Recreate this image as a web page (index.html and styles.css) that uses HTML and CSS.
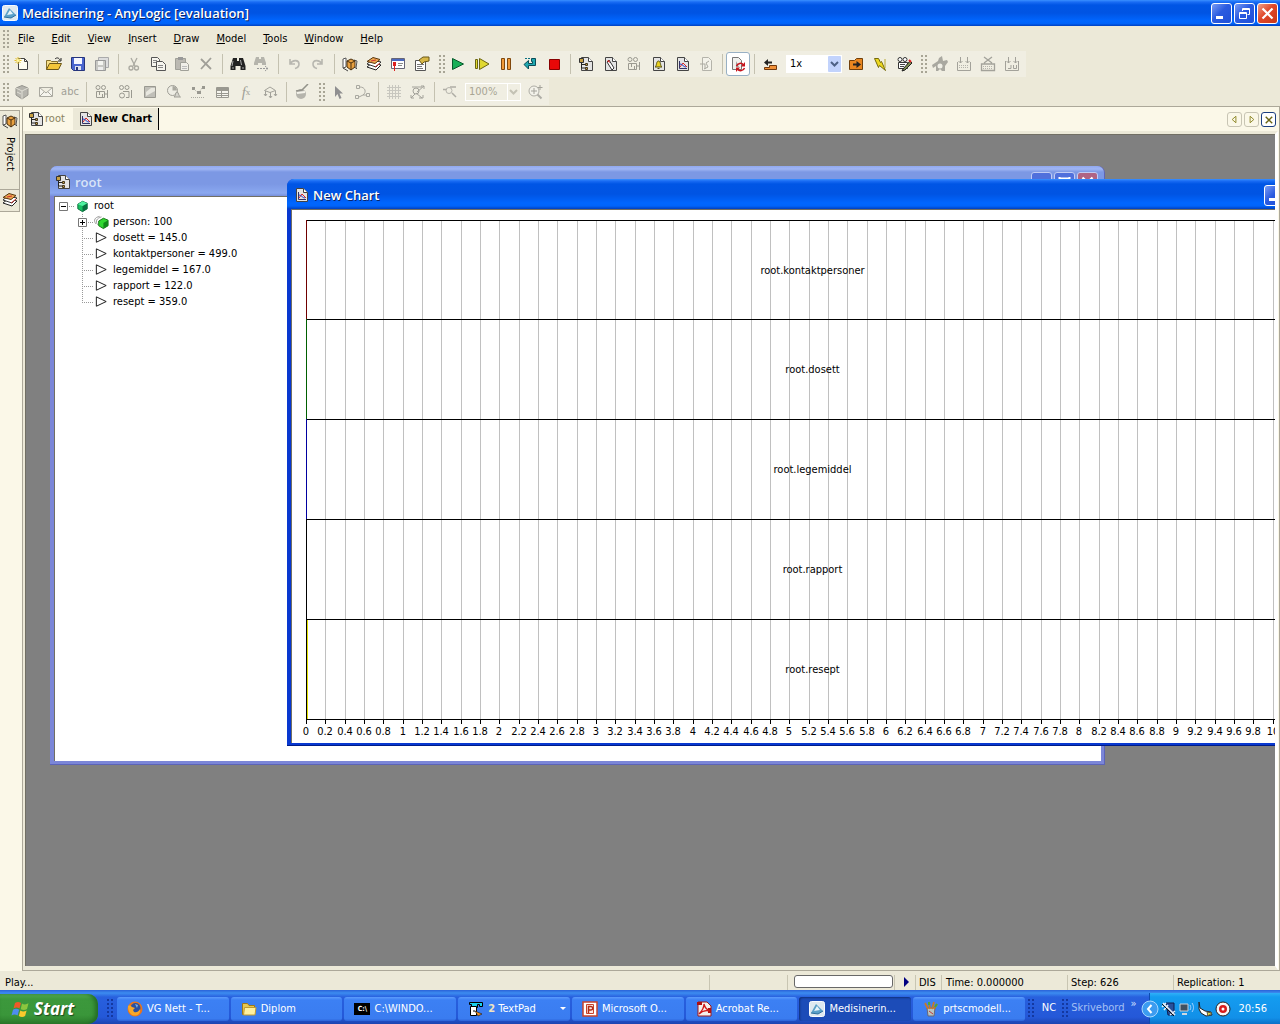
FILE: index.html
```html
<!DOCTYPE html>
<html lang="en">
<head>
<meta charset="utf-8">
<title>Medisinering - AnyLogic [evaluation]</title>
<link rel="stylesheet" href="styles.css">
</head>
<body>
<svg class="sprite" aria-hidden="true">
  <symbol id="app" viewBox="0 0 16 16"><rect x=".5" y=".5" width="15" height="15" rx="2" fill="#dfe9f0" stroke="#f8fbff"/><path d="M2 12L7 3l7 7-5 3z" fill="#5aa0c8"/><path d="M5 10l3-5 3 4z" fill="#e8f4fa"/><path d="M2 12l7 1 5-3" fill="none" stroke="#2c6f9c"/></symbol>
  <symbol id="new" viewBox="0 0 16 16"><path d="M4.500 2.500h6l3 3v8h-9z" fill="#fffef0" stroke="#444"/><path d="M10.500 2.500v3h3" fill="none" stroke="#444"/><path d="M4 1v7M.5 4.500h7M1.500 2l5 5M6.500 2l-5 5" stroke="#e2bd28"/><circle cx="4" cy="4.500" r="1.500" fill="#fff6a0"/></symbol>
  <symbol id="open" viewBox="0 0 16 16"><path d="M.5 13.500v-9h4l1 1h6v2" fill="#f8e088" stroke="#86702a"/><path d="M.5 13.500l3-6h12l-3 6z" fill="#f4c63a" stroke="#6b5618"/><path d="M9 3c2-2 4-1 5 1m1-2v3h-3" fill="none" stroke="#222"/></symbol>
  <symbol id="save" viewBox="0 0 16 16"><path d="M1.500 1.500h13v13h-11l-2-2z" fill="#4b66cf" stroke="#26357c"/><path d="M4 2h8v6H4z" fill="#f6f7ff"/><path d="M5 10h6v4H5z" fill="#dfe2ee"/><path d="M6 11h2v3H6z" fill="#26357c"/></symbol>
  <symbol id="saveall" viewBox="0 0 16 16"><path d="M4.500 1.500h10v10h-10z" fill="#ddd" stroke="#aaa"/><path d="M1.500 4.500h10v10h-10z" fill="#c8c8c4" stroke="#999"/><path d="M4 5h5v4H4z" fill="#f4f4f0"/><path d="M4 11h5v3H4z" fill="#eee"/></symbol>
  <symbol id="cut" viewBox="0 0 16 16"><g fill="none" stroke="#aaa9a0" stroke-width="1.300"><path d="M5 2l4 8M11 2L7 10"/><circle cx="5" cy="12" r="2"/><circle cx="10.500" cy="12" r="2"/></g></symbol>
  <symbol id="copy" viewBox="0 0 16 16"><g fill="#f6f5ee" stroke="#555"><path d="M1.500 1.500h6l2 2v7h-8z"/><path d="M6.500 5.500h6l3 3v6h-9z"/></g><path d="M3 4.500h4M3 6.500h3M8 9.500h5M8 11.500h5" stroke="#888"/></symbol>
  <symbol id="paste" viewBox="0 0 16 16"><path d="M1.500 2.500h10v11h-10z" fill="#bbb9b2" stroke="#a0a098"/><path d="M4 1h5v3H4z" fill="#999"/><path d="M6.500 6.500h6l2 2v6h-8z" fill="#f0efe8" stroke="#a0a098"/><path d="M8 10.500h5M8 12.500h5" stroke="#bbb"/></symbol>
  <symbol id="del" viewBox="0 0 16 16"><path d="M3 3l10 10M13 2L3 13" stroke="#a09f98" stroke-width="1.800"/></symbol>
  <symbol id="find" viewBox="0 0 16 16"><path d="M3 2h4v3h2V2h4l2.500 8v4h-5v-4h-5v4h-5v-4z" fill="#222"/><path d="M3 5l-1 5M10.500 4l1 5M2 12h2M12 12h2" stroke="#aaa"/></symbol>
  <symbol id="findnext" viewBox="0 0 16 16"><path d="M2 1h3v2h2V1h3l2 6v2H8V7H4v2H0V7z" fill="#b5b4ac"/><path d="M3 12.500h11M11 10l3 2.500-3 2.500" fill="none" stroke="#999" stroke-dasharray="2 1"/></symbol>
  <symbol id="undo" viewBox="0 0 16 16"><path d="M4 3v5h5M4 8c3-5 9-4 9 0 0 3-2 4-4 4.500" fill="none" stroke="#b8b7b0" stroke-width="1.600"/></symbol>
  <symbol id="redo" viewBox="0 0 16 16"><path d="M12 3v5H7M12 8c-3-5-9-4-9 0 0 3 2 4 4 4.500" fill="none" stroke="#b8b7b0" stroke-width="1.600"/></symbol>
  <symbol id="project" viewBox="0 0 16 16"><path d="M1 3l3-1v9l-3 1zM12 4l3 1-1 7-3-1z" fill="#fff" stroke="#555"/><path d="M5 5l4-2 4 2v6l-4 3-4-3z" fill="#e8a040" stroke="#4a3010"/><path d="M5 5l4 2 4-2M9 7v7" fill="none" stroke="#4a3010"/><path d="M1 12l5 3M14 12l1 1" stroke="#444"/></symbol>
  <symbol id="lib" viewBox="0 0 16 16"><path d="M1 11l5-4 9 2-5 5z" fill="#fff" stroke="#222"/><path d="M1 8l5-4 9 2-5 5z" fill="#fff" stroke="#333"/><path d="M1 5.500l6-4 7 2-5 4z" fill="#eda750" stroke="#5a3810"/><path d="M5 5l5-1M9 11l5-4" stroke="#c33"/></symbol>
  <symbol id="props" viewBox="0 0 16 16"><path d="M1.500 2.500h13v10h-13z" fill="#fff" stroke="#667"/><path d="M2 3h12v2H2z" fill="#4a68c0"/><path d="M8 7.500h5M8 9.500h4" stroke="#888"/><path d="M3 6h3v4H3z" fill="#d22"/><path d="M4.500 10v5" stroke="#d22"/></symbol>
  <symbol id="wizard" viewBox="0 0 16 16"><path d="M1.500 4.500h10v10h-10z" fill="#fff" stroke="#555"/><path d="M3 8.500h7M3 10.500h5M3 12.500h6" stroke="#777"/><path d="M5 4l4-3h6v4l-5 1-2 2z" fill="#d8b848" stroke="#6a5818"/></symbol>
  <symbol id="play" viewBox="0 0 16 16"><path d="M2.500 2.500L13.500 8l-11 5.500z" fill="#18b058" stroke="#075a2c"/></symbol>
  <symbol id="step" viewBox="0 0 16 16"><path d="M1.500 3.500h2v9h-2zM5.500 2.500L15 8l-9.500 5.500z" fill="#e0d830" stroke="#6a6410"/></symbol>
  <symbol id="pause" viewBox="0 0 16 16"><path d="M3.500 2.500h3v11h-3zM9.500 2.500h3v11h-3z" fill="#f09a38" stroke="#80480c"/></symbol>
  <symbol id="restart" viewBox="0 0 16 16"><path d="M9.500 2.500h4v7h-7V13L2 8.500 6.500 4.500v3h4v-2h-1z" fill="#1fa8b0" stroke="#0a4c58"/><path d="M3 2.500h5" stroke="#0a7080" stroke-dasharray="2 1"/></symbol>
  <symbol id="stop" viewBox="0 0 16 16"><path d="M3.500 3.500h10v10h-10z" fill="#e80808" stroke="#800"/></symbol>
  <symbol id="page" viewBox="0 0 16 16"><path d="M3.500 1.500h7l4 4v9h-11z" fill="#e4e4e4" stroke="#444"/><path d="M10.500 1.500v4h4" fill="#fff" stroke="#444"/></symbol>
  <symbol id="tree" viewBox="0 0 16 16"><use href="#page"/><path d="M3.500 5v7H8M4 8.500h4" fill="none" stroke="#222"/><path d="M1.500 2.500h4v4h-4z" fill="#c8a040" stroke="#333"/><path d="M7.500 7.500h2v2h-2zM7.500 11.500h2v2h-2z" fill="#c8a040" stroke="#443820"/></symbol>
  <symbol id="edit" viewBox="0 0 16 16"><use href="#page"/><path d="M7 4l5 8-2 2-5-8z" fill="#fff" stroke="#333"/><path d="M5 5l2-1 1 3z" fill="#d22"/></symbol>
  <symbol id="cam" viewBox="0 0 16 16"><g fill="none" stroke="#9a9990"><circle cx="4" cy="3.500" r="2"/><circle cx="9.500" cy="3.500" r="2"/><path d="M2.500 7.500h8v6h-8zM13.500 6v8M5.500 8v3M8.500 10v3M11 10h2"/></g></symbol>
  <symbol id="cam2" viewBox="0 0 16 16"><g fill="none" stroke="#9a9990"><circle cx="3.500" cy="3.500" r="2"/><circle cx="9" cy="3.500" r="2"/><circle cx="4" cy="11.500" r="2.500"/><path d="M5 7.500h6v6H8M13.500 6v8"/></g></symbol>
  <symbol id="bell" viewBox="0 0 16 16"><use href="#page"/><path d="M5 11c2-1 1-6 3.500-6s1.500 5 3.500 6zM7.500 12.500h2" fill="#e8d020" stroke="#555010"/></symbol>
  <symbol id="chart" viewBox="0 0 16 16"><use href="#page"/><path d="M5.500 5v7.500H13" fill="none" stroke="#336"/><path d="M6 11l3-4 4 4" fill="none" stroke="#d22"/><path d="M6 8c3 0 3 3 6 3" fill="none" stroke="#24c"/></symbol>
  <symbol id="pagedim" viewBox="0 0 16 16"><path d="M4.500 1.500h6l3 3v10h-9z" fill="#f3f2ea" stroke="#b4b3aa"/><path d="M2 8h5v5M11 5l-3 2 2 4-4 2" fill="none" stroke="#aaa9a0"/></symbol>
  <symbol id="refresh" viewBox="0 0 16 16"><path d="M2.500 1.500h6l3 3v9h-9z" fill="#f0f0ee" stroke="#777"/><path d="M6 5v6h3z" fill="#999"/><path d="M6.500 10a4 4 0 0 1 7-1M14.500 12a4 4 0 0 1-7 1" fill="none" stroke="#c8141c" stroke-width="1.500"/><path d="M15 6v4.500h-4zM6 16v-4.500h4z" fill="#c8141c"/></symbol>
  <symbol id="back" viewBox="0 0 16 16"><path d="M2.500 11.500h5v-2h7v4h-12z" fill="#f09038" stroke="#70380c"/><path d="M10 6.500H5" stroke="#222" stroke-width="2"/><path d="M2 6.500L6 3v7z" fill="#222"/></symbol>
  <symbol id="fwd" viewBox="0 0 16 16"><path d="M1.500 4.500h5l2-2h6v11h-13z" fill="#e88620" stroke="#70400c"/><path d="M5 8.500h4" stroke="#222" stroke-width="2"/><path d="M13 8.500L8.500 5v7z" fill="#222"/></symbol>
  <symbol id="bolt" viewBox="0 0 16 16"><path d="M2.500 2.500h4l2 4 1-1 4 9-6-5-1 2z" fill="#ecd820" stroke="#74690c"/><path d="M13 3v9" stroke="#b8a830"/></symbol>
  <symbol id="camera" viewBox="0 0 16 16"><g fill="#fff" stroke="#333"><circle cx="4" cy="3.500" r="2"/><circle cx="9" cy="3.500" r="2"/><path d="M2.500 6.500h9v6h-9z"/></g><path d="M4 8.500h5M4 10.500h4" stroke="#444"/><path d="M14 5l-7 8-1 2 3-1 7-7z" fill="#7b8c50" stroke="#222"/><path d="M13 4l2 2" stroke="#d22" stroke-width="2"/></symbol>
  <symbol id="bug" viewBox="0 0 16 16"><path d="M7 2l3-2 1 5 4-1 1 2-3 4v5h-3l-2-2-2 2H4v-5L1 12 0 9l6-4z" fill="#a9a8a0"/><circle cx="8" cy="10" r="2.500" fill="#f0efe6"/></symbol>
  <symbol id="bin" viewBox="0 0 16 16"><path d="M1.500 6v8.500h13V6M4.500 1v6M11.500 1v6M2.500 5l2 2 2-2M9.500 5l2 2 2-2" fill="none" stroke="#a3a29a"/><path d="M3 9.500h10M3 11.500h10" stroke="#b5b4ac" stroke-dasharray="1 1"/></symbol>
  <symbol id="binx" viewBox="0 0 16 16"><path d="M1.500 8v6.500h13V8zM4 1l8 6M12 1L4 7" fill="none" stroke="#a3a29a" stroke-width="1.300"/><path d="M3 10.500h10M3 12.500h10" stroke="#b5b4ac" stroke-dasharray="1 1"/></symbol>
  <symbol id="bing" viewBox="0 0 16 16"><path d="M1.500 5v9.500h13V5M4.500 1v6M11.500 1v6M2.500 5l2 2 2-2M9.500 5l2 2 2-2M4 12.500h3V9M9.500 9v3.500h3V9" fill="none" stroke="#a3a29a"/></symbol>
  <symbol id="cube" viewBox="0 0 16 16"><path d="M2 4l6-2.500L14 4v7l-6 4-6-4z" fill="#b5b4ad" stroke="#96958e"/><path d="M2 4l6 3 6-3M8 7v8M3 8l4 2" fill="none" stroke="#e0dfd6"/></symbol>
  <symbol id="mail" viewBox="0 0 16 16"><path d="M1.500 3.500h13v9h-13zM1.500 3.500L8 9l6.500-5.500M2 12l4-4M14 12l-4-4" fill="#f6f5ee" stroke="#aaa9a0"/></symbol>
  <symbol id="img" viewBox="0 0 16 16"><path d="M2.500 2.500h11v11h-11z" fill="#c0bfb8" stroke="#999890"/><path d="M4 8l5-4h4v3L4 12z" fill="#e8e7df"/></symbol>
  <symbol id="timer" viewBox="0 0 16 16"><circle cx="6.500" cy="6.500" r="5" fill="#eeede4" stroke="#9f9e96"/><path d="M6.500 6.500V2A4.500 4.500 0 0 1 11 6.500z" fill="#aaa9a0"/><path d="M8 13c2-1 1-5 3-5s1 4 3.500 5z" fill="#d5d4cc" stroke="#9f9e96"/></symbol>
  <symbol id="env" viewBox="0 0 16 16"><path d="M2 3h3v3H2zM7 7h4v3H7zM12 2h3v3h-3z" fill="#999890"/><path d="M1 13.500h14M4 5l3 3M12 4l-2 3" stroke="#aaa9a0" stroke-dasharray="1 1"/></symbol>
  <symbol id="table" viewBox="0 0 16 16"><path d="M2.500 3.500h12v10h-12zM2.500 6.500h12M2.500 9.500h12M2.500 11.500h12M7.500 6v7" fill="#f6f5ee" stroke="#999890"/><path d="M3 4h11v2H3z" fill="#999890"/></symbol>
  <symbol id="branch" viewBox="0 0 16 16"><path d="M2.500 6.500L8 3l5.500 3.500L8 8.500zM3.500 7v5M8.500 8v6M13.500 7v5M2 10l1.500 2L5 10M7 12l1.500 2 1.500-2M12 10l1.500 2 1.500-2" fill="none" stroke="#a3a29a"/></symbol>
  <symbol id="ball" viewBox="0 0 16 16"><circle cx="7" cy="10" r="5" fill="#b5b4ac"/><path d="M2 7l6-1 6-6" fill="none" stroke="#93928a" stroke-width="1.500"/><path d="M3 9l8-1" stroke="#f4f3ea" stroke-width="2"/></symbol>
  <symbol id="arrow" viewBox="0 0 16 16"><path d="M5 2v11l2.500-3 2 5 2-1-2-4.500H13z" fill="#8f8f90"/></symbol>
  <symbol id="curve" viewBox="0 0 16 16"><path d="M2.500 1.500h3v3h-3zM1.500 11.500h3v3h-3zM12.500 9.500h3v3h-3zM6 3c5 0 7 5 3 8l-4 2M9 11h3" fill="none" stroke="#a9a8a0"/></symbol>
  <symbol id="grid" viewBox="0 0 16 16"><path d="M3.500 1v14M6.500 1v14M9.500 1v14M12.500 1v14M1 3.500h14M1 6.500h14M1 9.500h14M1 12.500h14" stroke="#c8c7bf"/></symbol>
  <symbol id="snap" viewBox="0 0 16 16"><path d="M2 3h10M7 8l7-6M11 2h3v3M6 9l6 5M5 10l-4 4M1 11v3h3M9 14h4v-3" fill="none" stroke="#a3a29a"/><circle cx="6" cy="7" r="3" fill="none" stroke="#a3a29a"/></symbol>
  <symbol id="zoomout" viewBox="0 0 16 16"><path d="M1 5.500h4M8 3h6M10 9l4 4" stroke="#aeada5" stroke-width="1.500"/><circle cx="7" cy="6.500" r="3" fill="none" stroke="#b5b4ac"/></symbol>
  <symbol id="zoomin" viewBox="0 0 16 16"><circle cx="7" cy="7" r="5" fill="#f3f2ea" stroke="#aeada5"/><path d="M4 7h6M7 4v6M13 1v5M10.500 3.500h5" stroke="#a3a29a"/><path d="M10.500 10.500l4 4" stroke="#aeada5" stroke-width="2"/></symbol>
  <symbol id="gcube" viewBox="0 0 16 16"><path d="M3 6l5-3 5 2v6l-5 3-5-3z" fill="#18c060" stroke="#0c6a3a"/><path d="M8 8l5-3v6l-5 3z" fill="#0a7040"/><path d="M3 6l5 2 5-3-5-2z" fill="#50f0a0"/></symbol>
  <symbol id="gcubes" viewBox="0 0 16 16"><path d="M2 10c-3-4-1-7 4-8M4 11C1 7 3 4 8 2.500" fill="none" stroke="#999"/><path d="M5 7l5-3 5 2v6l-5 3-5-3z" fill="#30d830" stroke="#147014"/><path d="M10 9l5-3v6l-5 3z" fill="#108a18"/></symbol>
  <symbol id="tri" viewBox="0 0 16 16"><path d="M2.500 2.500L13 7.500l-10.500 5z" fill="#fff" stroke="#111"/></symbol>
  <symbol id="lead-minus" viewBox="0 0 16 16"><path d="M10 8.500h6" stroke="#999" stroke-dasharray="1 1"/><path d="M.5 4.500h8v8h-8z" fill="#fff" stroke="#777"/><path d="M2 8.500h5" stroke="#000"/></symbol>
  <symbol id="lead-plus" viewBox="0 0 16 16"><path d="M4.500 0v16M10 8.500h6" stroke="#999" stroke-dasharray="1 1"/><path d="M.5 4.500h8v8h-8z" fill="#fff" stroke="#777"/><path d="M2 8.500h5M4.500 6v5" stroke="#000"/></symbol>
  <symbol id="lead-mid" viewBox="0 0 16 16"><path d="M4.500 0v16M4 8.500h12" stroke="#999" stroke-dasharray="1 1"/></symbol>
  <symbol id="lead-end" viewBox="0 0 16 16"><path d="M4.500 0v9M4 8.500h12" stroke="#999" stroke-dasharray="1 1"/></symbol>
  <symbol id="w-min" viewBox="0 0 19 19"><path d="M4 12h7v3H4z" fill="#fff"/></symbol>
  <symbol id="w-max" viewBox="0 0 19 19"><path d="M4 5.500h11M4.500 4v11h10V4" fill="none" stroke="#fff" stroke-width="2"/></symbol>
  <symbol id="w-restore" viewBox="0 0 19 19"><path d="M4.500 8.500h7v6h-7zM4 9.500h8M7.500 7V4.500h7v6h-2M7 5.500h8" fill="none" stroke="#fff"/></symbol>
  <symbol id="w-close" viewBox="0 0 19 19"><path d="M4.500 4.500l10 10M14.500 4.500l-10 10" stroke="#fff" stroke-width="2.200"/></symbol>
  <symbol id="flag" viewBox="0 0 20 18"><path d="M4 3c2-1.500 4-1.500 6 0L8.500 8.500c-2-1.500-4-1.500-6 0z" fill="#f05a28"/><path d="M11 3.500c2 1.200 4 1.200 6.500-.2L16 9c-2 1.300-4 1.300-6.300.2z" fill="#8cc63e"/><path d="M2 9.800c2-1.400 4-1.400 6.200 0L6.600 15.500c-2-1.400-4-1.400-6.100 0z" fill="#4f8df0"/><path d="M9.300 10.500c2 1.200 4 1.200 6.300 0l-1.500 5.500c-2 1.300-4 1.300-6.300 0z" fill="#fcc92c"/></symbol>
  <symbol id="fox" viewBox="0 0 16 16"><circle cx="8" cy="8" r="7.500" fill="#e8741c"/><circle cx="8.500" cy="7" r="5" fill="#2a4fa0"/><path d="M1 5c2-1 3 0 4 1l3 1-2 2 1 2c3 1 5-1 6-3 1 5-3 7-6 6.500S1 11 1 5z" fill="#f8a828"/><path d="M8 3l3 1-1 3z" fill="#78b0e8"/></symbol>
  <symbol id="folder" viewBox="0 0 16 16"><path d="M1.500 13.500v-11h5l1.500 2h5.500v9z" fill="#e8c850" stroke="#a07818"/><path d="M3.500 6.500h11.500l-1 7.500H2.500z" fill="#fff0a0" stroke="#c09a30"/></symbol>
  <symbol id="textpad" viewBox="0 0 16 16"><path d="M1.500 1.500h13v4h-3v-2h-2v3h-6v-3h-2z" fill="#18d0f0" stroke="#000"/><path d="M2.500 5.500h6v9h-6z" fill="#fff" stroke="#000"/><path d="M5 10h2" stroke="#000"/><path d="M7 10l7 3-4 2z" fill="#f09020" stroke="#000" stroke-width=".5"/></symbol>
  <symbol id="ppt" viewBox="0 0 16 16"><path d="M1 1h14v14H1z" fill="#fff" stroke="#c8432c" stroke-width="1.500"/><path d="M4.500 3.500h7v9h-7z" fill="#fbe6e0" stroke="#c8432c"/><path d="M6.500 12V5.500H9a1.500 1.500 0 0 1 0 3.500H6.500" fill="none" stroke="#b02c18" stroke-width="1.500"/></symbol>
  <symbol id="pdf" viewBox="0 0 16 16"><path d="M2 1h9l4 4v10H2z" fill="#f4f0ee" stroke="#a01818"/><path d="M1 1h5v3H1zM12 7h3v5h-3z" fill="#b01010"/><path d="M3 13C6 10 8 6 8 3c1 4 3 6 6 7-4-1-8 0-11 3z" fill="none" stroke="#d01818" stroke-width="1.300"/></symbol>
  <symbol id="paint" viewBox="0 0 16 16"><path d="M4 7h8l-1 8H5z" fill="#b8c4c0" stroke="#667"/><path d="M5 8L2 2M7 8L6 1M9 8l2-7M11 8l3-5" stroke="#c87828" stroke-width="1.800"/><path d="M6 1v3M14 3l-2 3" stroke="#48a838" stroke-width="2"/><path d="M6 10l4 3" stroke="#c03838"/></symbol>
</svg>

<header class="titlebar">
  <svg class="ico"><use href="#app"/></svg>
  <h1 class="caption">Medisinering - AnyLogic [evaluation]</h1>
  <button class="wbtn" aria-label="Minimize"><svg><use href="#w-min"/></svg></button>
  <button class="wbtn" aria-label="Restore"><svg><use href="#w-restore"/></svg></button>
  <button class="wbtn wbtn-close" aria-label="Close"><svg><use href="#w-close"/></svg></button>
</header>

<nav class="menubar">
  <span class="grip"></span>
  <button><u>F</u>ile</button><button><u>E</u>dit</button><button><u>V</u>iew</button><button><u>I</u>nsert</button><button><u>D</u>raw</button><button><u>M</u>odel</button><button><u>T</u>ools</button><button><u>W</u>indow</button><button><u>H</u>elp</button>
</nav>

<div class="toolrow">
  <div class="toolbar">
    <span class="grip"></span>
    <button class="tool" aria-label="New"><svg><use href="#new"/></svg></button><i class="sep"></i>
    <button class="tool" aria-label="Open"><svg><use href="#open"/></svg></button>
    <button class="tool" aria-label="Save"><svg><use href="#save"/></svg></button>
    <button class="tool" aria-label="Save all"><svg><use href="#saveall"/></svg></button><i class="sep"></i>
    <button class="tool" aria-label="Cut"><svg><use href="#cut"/></svg></button>
    <button class="tool" aria-label="Copy"><svg><use href="#copy"/></svg></button>
    <button class="tool" aria-label="Paste"><svg><use href="#paste"/></svg></button>
    <button class="tool" aria-label="Delete"><svg><use href="#del"/></svg></button><i class="sep"></i>
    <button class="tool" aria-label="Find"><svg><use href="#find"/></svg></button>
    <button class="tool" aria-label="Find next"><svg><use href="#findnext"/></svg></button><i class="sep"></i>
    <button class="tool" aria-label="Undo"><svg><use href="#undo"/></svg></button>
    <button class="tool" aria-label="Redo"><svg><use href="#redo"/></svg></button><i class="sep"></i>
    <button class="tool" aria-label="Project"><svg><use href="#project"/></svg></button>
    <button class="tool" aria-label="Library"><svg><use href="#lib"/></svg></button>
    <button class="tool" aria-label="Output"><svg><use href="#props"/></svg></button>
    <button class="tool" aria-label="Properties"><svg><use href="#wizard"/></svg></button>
  </div>
  <div class="toolbar">
    <span class="grip"></span>
    <button class="tool" aria-label="Run"><svg><use href="#play"/></svg></button>
    <button class="tool" aria-label="Step"><svg><use href="#step"/></svg></button>
    <button class="tool" aria-label="Pause"><svg><use href="#pause"/></svg></button>
    <button class="tool" aria-label="Restart"><svg><use href="#restart"/></svg></button>
    <button class="tool" aria-label="Stop"><svg><use href="#stop"/></svg></button><i class="sep"></i>
    <button class="tool" aria-label="Model tree"><svg><use href="#tree"/></svg></button>
    <button class="tool" aria-label="Inspect"><svg><use href="#edit"/></svg></button>
    <button class="tool" aria-label="Animation"><svg><use href="#cam"/></svg></button>
    <button class="tool" aria-label="Events"><svg><use href="#bell"/></svg></button>
    <button class="tool" aria-label="New chart"><svg><use href="#chart"/></svg></button>
    <button class="tool" aria-label="Log"><svg><use href="#pagedim"/></svg></button><i class="sep"></i>
    <button class="tool tool-on" aria-label="Auto refresh" aria-pressed="true"><svg><use href="#refresh"/></svg></button><i class="sep"></i>
    <button class="tool" aria-label="Slower"><svg><use href="#back"/></svg></button>
    <select class="combo" aria-label="Speed"><option>1x</option></select>
    <button class="tool" aria-label="Faster"><svg><use href="#fwd"/></svg></button>
    <button class="tool" aria-label="Full speed"><svg><use href="#bolt"/></svg></button>
    <button class="tool" aria-label="Animation setup"><svg><use href="#camera"/></svg></button>
  </div>
  <div class="toolbar">
    <span class="grip"></span>
    <button class="tool" aria-label="Debug"><svg><use href="#bug"/></svg></button>
    <button class="tool" aria-label="Build"><svg><use href="#bin"/></svg></button>
    <button class="tool" aria-label="Clean"><svg><use href="#binx"/></svg></button>
    <button class="tool" aria-label="Rebuild"><svg><use href="#bing"/></svg></button>
  </div>
</div>

<div class="toolrow toolrow-last">
  <div class="toolbar">
    <span class="grip"></span>
    <button class="tool" aria-label="Active object"><svg><use href="#cube"/></svg></button>
    <button class="tool" aria-label="Message"><svg><use href="#mail"/></svg></button>
    <button class="tool tool-text">abc</button><i class="sep"></i>
    <button class="tool" aria-label="Port"><svg><use href="#cam"/></svg></button>
    <button class="tool" aria-label="Animated object"><svg><use href="#cam2"/></svg></button>
    <button class="tool" aria-label="Image"><svg><use href="#img"/></svg></button>
    <button class="tool" aria-label="Timer"><svg><use href="#timer"/></svg></button>
    <button class="tool" aria-label="Environment"><svg><use href="#env"/></svg></button>
    <button class="tool" aria-label="Table"><svg><use href="#table"/></svg></button>
    <button class="tool tool-fx"><i>f</i><sub>x</sub></button>
    <button class="tool" aria-label="Branch"><svg><use href="#branch"/></svg></button><i class="sep"></i>
    <button class="tool" aria-label="Experiment"><svg><use href="#ball"/></svg></button>
  </div>
  <div class="toolbar">
    <span class="grip"></span>
    <button class="tool" aria-label="Select"><svg><use href="#arrow"/></svg></button>
    <button class="tool" aria-label="Edit points"><svg><use href="#curve"/></svg></button><i class="sep"></i>
    <button class="tool" aria-label="Grid"><svg><use href="#grid"/></svg></button>
    <button class="tool" aria-label="Snap"><svg><use href="#snap"/></svg></button><i class="sep"></i>
    <button class="tool" aria-label="Zoom out"><svg><use href="#zoomout"/></svg></button>
    <select class="combo combo-off" aria-label="Zoom" disabled><option>100%</option></select>
    <button class="tool" aria-label="Zoom in"><svg><use href="#zoomin"/></svg></button>
  </div>
</div>

<main class="work">
  <aside class="dock">
    <button class="docktab docktab-project"><svg class="ico"><use href="#project"/></svg><span>Project</span></button>
    <button class="docktab" aria-label="Library"><svg class="ico"><use href="#lib"/></svg></button>
  </aside>
  <section class="docs">
    <div class="tabs">
      <button class="tab"><svg class="ico"><use href="#tree"/></svg>root</button>
      <button class="tab tab-on"><svg class="ico"><use href="#chart"/></svg>New Chart</button>
      <span class="fill"></span>
      <button class="navbtn" aria-label="Previous"><svg viewBox="0 0 14 14"><path d="M8.500 3.500v7l-4-3.500z" fill="none" stroke="#8a8420"/></svg></button>
      <button class="navbtn" aria-label="Next"><svg viewBox="0 0 14 14"><path d="M5.500 3.500v7l4-3.500z" fill="none" stroke="#8a8420"/></svg></button>
      <button class="navbtn navbtn-on" aria-label="Close document"><svg viewBox="0 0 14 14"><path d="M4 4l7 7M11 4l-7 7" stroke="#6b6410" stroke-width="1.500"/></svg></button>
    </div>
    <div class="mdi">
      <section class="win win-root">
        <header class="wintitle">
          <svg class="ico"><use href="#tree"/></svg><h2 class="caption">root</h2>
          <button class="wbtn" aria-label="Minimize"><svg><use href="#w-min"/></svg></button>
          <button class="wbtn" aria-label="Maximize"><svg><use href="#w-max"/></svg></button>
          <button class="wbtn wbtn-close" aria-label="Close"><svg><use href="#w-close"/></svg></button>
        </header>
        <div class="winbody">
          <ul class="treelist">
            <li><div class="node"><svg class="lead"><use href="#lead-minus"/></svg><svg class="nico"><use href="#gcube"/></svg>root</div>
              <ul>
                <li class="node"><svg class="lead"><use href="#lead-plus"/></svg><svg class="nico"><use href="#gcubes"/></svg>person: 100</li>
                <li class="node"><svg class="lead"><use href="#lead-mid"/></svg><svg class="nico"><use href="#tri"/></svg>dosett = 145.0</li>
                <li class="node"><svg class="lead"><use href="#lead-mid"/></svg><svg class="nico"><use href="#tri"/></svg>kontaktpersoner = 499.0</li>
                <li class="node"><svg class="lead"><use href="#lead-mid"/></svg><svg class="nico"><use href="#tri"/></svg>legemiddel = 167.0</li>
                <li class="node"><svg class="lead"><use href="#lead-mid"/></svg><svg class="nico"><use href="#tri"/></svg>rapport = 122.0</li>
                <li class="node"><svg class="lead"><use href="#lead-end"/></svg><svg class="nico"><use href="#tri"/></svg>resept = 359.0</li>
              </ul>
            </li>
          </ul>
        </div>
      </section>
      <section class="win win-chart">
        <header class="wintitle">
          <svg class="ico"><use href="#chart"/></svg><h2 class="caption">New Chart</h2>
          <button class="wbtn" aria-label="Minimize"><svg><use href="#w-min"/></svg></button>
          <button class="wbtn" aria-label="Maximize"><svg><use href="#w-max"/></svg></button>
          <button class="wbtn wbtn-close" aria-label="Close"><svg><use href="#w-close"/></svg></button>
        </header>
        <div class="winbody"><svg class="plot" id="plot"></svg></div>
      </section>
    </div>
  </section>
</main>

<footer class="status">
  <span class="cell cell-main">Play...</span>
  <span class="cell cell-gap"></span>
  <span class="cell cell-progress"><span class="bar"></span></span>
  <span class="cell cell-arrow"><svg width="7" height="10"><path d="M1 0l5 5-5 5z" fill="#000080"/></svg></span>
  <span class="cell cell-mode">DIS</span>
  <span class="cell cell-time">Time: 0.000000</span>
  <span class="cell cell-step">Step: 626</span>
  <span class="cell cell-rep">Replication: 1</span>
</footer>

<footer class="taskbar">
  <button class="start"><svg><use href="#flag"/></svg>Start</button>
  <span class="grip grip-blue grip-start"></span>
  <div class="tasks">
    <button class="task"><svg class="ico"><use href="#fox"/></svg>VG Nett - T...</button>
    <button class="task"><svg class="ico"><use href="#folder"/></svg>Diplom</button>
    <button class="task"><span class="cmd">C:\</span>C:\WINDO...</button>
    <button class="task"><svg class="ico"><use href="#textpad"/></svg><span><b class="count">2</b> TextPad</span><span class="drop"></span></button>
    <button class="task"><svg class="ico"><use href="#ppt"/></svg>Microsoft O...</button>
    <button class="task"><svg class="ico"><use href="#pdf"/></svg>Acrobat Re...</button>
    <button class="task task-on"><svg class="ico"><use href="#app"/></svg>Medisinerin...</button>
    <button class="task"><svg class="ico"><use href="#paint"/></svg>prtscmodell...</button>
  </div>
  <span class="grip grip-blue"></span>
  <span class="lang">NC</span>
  <span class="grip grip-blue"></span>
  <span class="desk">Skrivebord</span><span class="more">»</span>
  <div class="tray">
    <button class="expand" aria-label="Show hidden icons"><svg viewBox="0 0 18 18"><circle cx="9" cy="9" r="8" fill="#3c9cf0" stroke="#a8d8ff"/><path d="M10.500 5L7 9l3.500 4" fill="none" stroke="#fff" stroke-width="2"/></svg></button>
    <svg class="ico" viewBox="0 0 16 16"><path d="M5 2h8v12H7z" fill="#28509c" stroke="#0c1c50"/><path d="M2 2l12 12M1 6l4-4M9 14l5-4M3 9l4-5" stroke="#e8eef8" stroke-width="1.500"/><path d="M1 3l12 12" stroke="#111"/></svg>
    <svg class="ico" viewBox="0 0 16 16"><path d="M1 3h8v7H1z" fill="#405060" stroke="#c8d0d8"/><path d="M3 13h5" stroke="#d0d8e0" stroke-width="2"/><path d="M11 4c1 2 1 3 0 5M13 2c2 3 2 6 0 9" fill="none" stroke="#a8d4ff"/></svg>
    <svg class="ico" viewBox="0 0 16 16"><path d="M2 1l1 6 5 3 6 1 1 3-6 1-5-3-2-4z" fill="#fff" stroke="#222"/><path d="M10 11l5 1-4 3z" fill="#e8d838" stroke="#554"/></svg>
    <svg class="ico" viewBox="0 0 16 16"><circle cx="8" cy="8" r="7" fill="#f8f8f8" stroke="#222"/><circle cx="8" cy="8" r="4" fill="#d81c1c"/><circle cx="8" cy="8" r="1.500" fill="#fff"/></svg>
    <time>20:56</time>
  </div>
</footer>
<script src="app.js"></script>
</body>
</html>
```
FILE: styles.css
```css
* { box-sizing: border-box; }
body {
  margin: 0; height: 100vh; display: flex; flex-direction: column; overflow: hidden;
  background: #ece9d8; color: #000;
  font: 11px/16px "DejaVu Sans Condensed", "DejaVu Sans", "Noto Sans", sans-serif;
}
button, select { font: inherit; color: inherit; margin: 0; padding: 0; border: 0; background: none; }
h1, h2, ul { margin: 0; padding: 0; }
ul { list-style: none; }
svg { display: block; flex: none; }
.sprite { position: absolute; width: 0; height: 0; }
.ico { width: 16px; height: 16px; }
.fill { flex: 1; }

/* Title bars */
.titlebar, .wintitle {
  display: flex; align-items: center; gap: 2px; color: #fff;
  background: linear-gradient(#3a90ff 0, #1a6cf4 2px, #0055e5 5px, #0054e3 50%, #0066ff 80%, #0064fa 90%, #0040c0 100%);
}
.titlebar { height: 26px; padding: 0 2px; flex: none; }
.caption { flex: 1; padding-left: 2px; font: 600 13px/20px "Open Sans", "Noto Sans", sans-serif; text-shadow: 1px 1px #0a246a; }
.wbtn { width: 21px; height: 21px; border: 1px solid #fff; border-radius: 3px; background: linear-gradient(135deg, #7a9cf4, #2a5be0 45%, #1f50d8); }
.wbtn svg { width: 19px; height: 19px; }
.wbtn-close { background: linear-gradient(135deg, #f0a088, #e0482a 45%, #c83818); }

/* Menus and toolbars */
.menubar, .toolrow, .toolbar { display: flex; align-items: center; }
.menubar { height: 25px; padding-left: 2px; flex: none; }
.menubar button { padding: 0 9px 0 8px; height: 24px; }
.menubar .grip { width: 8px; }
.toolrow { height: 26px; flex: none; }
.toolrow-last { height: 30px; border-bottom: 1px solid #aca899; }
.toolbar { height: 26px; background: #f0eee2; }
.toolbar:first-child { margin-left: -2px; }
.toolbar:last-child { padding-right: 2px; }
.grip {
  width: 12px; height: 20px; flex: none; align-self: center;
  background: radial-gradient(circle, #a8a595 1px, transparent 1px) 4px 0 / 4px 4px repeat-y,
    radial-gradient(circle, #a8a595 1px, transparent 1px) 8px 0 / 4px 4px repeat-y;
}
.menubar .grip { background-position: 0 0, 4px 0; }
.tool { width: 24px; height: 24px; display: flex; align-items: center; justify-content: center; }
.tool svg { width: 16px; height: 16px; }
.tool-on { background: #fff; border: 1px solid #98b0c4; border-radius: 3px; }
.tool-text, .tool-fx { color: #a09f96; }
.tool-fx { font: 15px/20px "Liberation Serif", serif; }
.tool-fx sub { font-size: 9px; line-height: 8px; }
.sep { width: 8px; height: 20px; flex: none; background: linear-gradient(#c4c1b0, #c4c1b0) 4px 0 / 1px 100% no-repeat; }
.combo {
  appearance: none; width: 56px; height: 18px; margin: 0 2px 0 4px; padding: 0 4px;
  background: url("data:image/svg+xml,%3Csvg xmlns='http://www.w3.org/2000/svg' width='13' height='16'%3E%3Crect width='13' height='16' rx='1' fill='%23c2d3fc'/%3E%3Cpath d='M3 6l3.500 3.500L10 6' fill='none' stroke='%234d6185' stroke-width='2'/%3E%3C/svg%3E") right 1px center no-repeat #fff;
}
.combo-off {
  border: 1px solid #fff; color: #a8a594; opacity: 1; margin-left: 3px; padding: 0 3px;
  background: url("data:image/svg+xml,%3Csvg xmlns='http://www.w3.org/2000/svg' width='13' height='16'%3E%3Crect width='1' height='16' fill='%23fff'/%3E%3Cpath d='M3 6l3.500 3.500L10 6' fill='none' stroke='%23c4c2b4' stroke-width='2'/%3E%3C/svg%3E") right center no-repeat #f0eee2;
}

/* Work area */
.work { flex: 1; min-height: 0; display: flex; background: #fbf8e8; }
.dock { width: 22px; padding-top: 3px; }
.docktab {
  display: flex; flex-direction: column; align-items: center; gap: 8px; width: 20px; height: 22px; padding-top: 2px;
  background: #ece9d8; border: 1px solid #aca899; border-left: 0; border-top: 0;
}
.docktab-project { height: 80px; border-top: 1px solid #aca899; }
.docktab span { writing-mode: vertical-rl; }
.docs { flex: 1; min-width: 0; display: flex; flex-direction: column; border: solid #aca899; border-width: 0 1px 1px; }
.tabs { display: flex; align-items: center; height: 24px; padding: 0 3px 0 5px; gap: 2px; flex: none; }
.tab { display: flex; align-items: center; gap: 1px; height: 22px; color: #8a8360; padding-right: 6px; }
.tab-on { background: #ece9d8; color: #000; font-weight: bold; border-right: 1px solid #000; padding: 0 6px 0 4px; }
.navbtn { width: 15px; height: 15px; border: 1px solid #c8c5b4; border-radius: 3px; }
.navbtn svg { width: 13px; height: 13px; }
.navbtn-on { border-color: #1c3f80; background: #fff; }
.mdi {
  flex: 1; position: relative; overflow: hidden; background: #808080; margin-right: 1px;
  border: solid #ece9d8; border-width: 3px 3px 4px 2px; border-right-color: #fff;
}
.mdi::before { content: ""; position: absolute; inset: 0; border: solid #716f64; border-width: 1px 0 0 1px; }

/* Child windows */
.win { position: absolute; display: flex; flex-direction: column; border-radius: 7px 7px 0 0; }
.wintitle { height: 30px; flex: none; border-radius: 7px 7px 0 0; padding: 2px 2px 0; }
.winbody { flex: 1; min-height: 0; background: #fff; border: 1px solid #716f64; border-width: 1px 0 0 1px; }
.win-root { left: 25px; top: 32px; width: 1055px; height: 599px; padding: 0 3px 3px 4px; background: #7b86d8; border: 1px solid #5c64b8; border-width: 0 1px 1px 0; }
.win-root .wintitle { margin: 0 -3px 0 -4px; padding: 2px 6px 0 5px; background: linear-gradient(#90a8f0 0, #a0b6f4 3px, #7c98e4 6px, #7c98e4 60%, #8aa8f0 90%, #7890dc 100%); }
.win-root .caption { color: #d8e4f8; text-shadow: none; }
.win-root .wbtn { background: #5070dc; border-color: #c0ccf4; }
.win-root .wbtn-close { background: #b06484; }
.win-chart { left: 262px; top: 45px; width: 1050px; height: 567px; padding: 0 4px 2px; background: #0838d0; border-bottom: 1px solid #001c88; }
.win-chart .wintitle { margin: 0 -4px; padding: 2px 6px 0; }
.treelist { padding: 1px 0 0 4px; }
.treelist ul { padding-left: 19px; }
.node { display: flex; align-items: center; height: 16px; white-space: nowrap; }
.lead { width: 16px; height: 16px; }
.nico { width: 15px; height: 16px; margin-right: 4px; }
.plot { width: 100%; height: 100%; }
.plot text { text-anchor: middle; }

/* Status bar */
.status { display: flex; align-items: flex-end; height: 19px; flex: none; }
.cell { height: 15px; line-height: 15px; padding-left: 4px; border-left: 1px solid #c8c5b2; white-space: nowrap; }
.cell-main { flex: 1; border: 0; padding-left: 5px; }
.cell-gap { width: 78px; }
.cell-progress { width: 107px; padding: 0 1px 0 6px; }
.bar { display: block; height: 13px; background: #fff; border: 1px solid #686868; border-radius: 3px; }
.cell-arrow { width: 21px; padding: 2px 0 0 8px; }
.cell-mode { width: 26px; padding-left: 3px; }
.cell-time { width: 126px; }
.cell-step { width: 106px; padding-left: 3px; }
.cell-rep { width: 107px; padding-left: 3px; }

/* Taskbar */
.taskbar {
  display: flex; align-items: center; height: 34px; flex: none; color: #fff; padding-top: 2px;
  background: linear-gradient(#2a62d8 0, #3c8cf0 3px, #2860de 7px, #2458d8 80%, #1c44b0 100%);
}
.start {
  width: 98px; height: 30px; align-self: flex-end; display: flex; align-items: center; gap: 3px; padding-left: 11px;
  border-radius: 0 10px 10px 0; font: italic bold 17px/22px "Noto Sans", sans-serif; text-shadow: 1px 1px 1px #1c4a1c;
  background: linear-gradient(#5cb45c 0, #3c983c 5px, #3a963a 70%, #2c7c2c 100%);
  box-shadow: inset -3px 0 4px #246c24;
}
.start svg { width: 20px; height: 18px; }
.grip-blue {
  background: radial-gradient(circle, #1438a0 1px, transparent 1px) 2px 0 / 4px 4px repeat-y,
    radial-gradient(circle, #1438a0 1px, transparent 1px) 6px 0 / 4px 4px repeat-y;
}
.grip-start { margin-left: 6px; }
.tasks { flex: 1; min-width: 0; display: flex; gap: 2px; padding: 1px 0 0 1px; }
.task {
  flex: 1; min-width: 0; height: 24px; display: flex; align-items: center; gap: 4px; padding-left: 10px;
  border-radius: 3px; white-space: nowrap; background: linear-gradient(#5c9cfc 0, #3c80f4 3px, #3a7cf0 90%, #2c64d8);
}
.task-on { background: #1c4cb8; box-shadow: inset 1px 1px 2px #10307c; }
.count { color: #f0e4c0; }
.drop { margin-left: auto; margin-right: 4px; border: solid transparent; border-width: 3px 3px 0; border-top-color: #fff; }
.cmd { width: 16px; height: 12px; background: #000; font: bold 7px/12px "DejaVu Sans Condensed", sans-serif; text-align: center; }
.lang { padding: 0 3px 0 5px; }
.desk { color: #a4c0f4; }
.more { padding: 0 4px 8px 6px; color: #d0e0ff; }
.tray {
  display: flex; align-items: center; gap: 2px; height: 31px; align-self: flex-end; padding-right: 13px; margin-left: 9px;
  border-left: 1px solid #0c4cb0; background: linear-gradient(#30b0f8 0, #149cf0 4px, #1290e8 80%, #0c70c8);
}
.expand { margin-left: -9px; }
.expand svg { width: 18px; height: 18px; }
.tray time { padding-left: 5px; }
```
FILE: app.js
```js
const NS = "http://www.w3.org/2000/svg";
const plot = document.getElementById("plot");

function add(name, attrs, text) {
  const el = document.createElementNS(NS, name);
  for (const key in attrs) el.setAttribute(key, attrs[key]);
  if (text !== undefined) el.textContent = text;
  plot.appendChild(el);
}

const left = 14, top0 = 10, rowHeight = 100, width = 1013, perUnit = 96.67;
const bottom = top0 + 5 * rowHeight - 1;
const series = [
  ["root.kontaktpersoner", "#700000"],
  ["root.dosett", "#006000"],
  ["root.legemiddel", "#0000a0"],
  ["root.rapport", "#000000"],
  ["root.resept", "#e0e000"]
];

for (let i = 1; i <= 52; i++) {
  add("rect", { x: left + Math.round(i * perUnit / 5), y: top0, width: 1, height: bottom - top0, fill: "#c0c0c0" });
}
series.forEach(([name, color], i) => {
  const y = top0 + i * rowHeight - (i ? 1 : 0);
  add("rect", { x: left, y: y, width: width, height: 1, fill: "#000" });
  add("rect", { x: left, y: y, width: 1, height: rowHeight, fill: i < 3 ? color : "#000" });
  if (i === 4) add("rect", { x: left + 1, y: y + 1, width: 1, height: rowHeight, fill: color });
  add("text", { x: left + width / 2, y: y + 54 }, name);
});
add("rect", { x: left, y: bottom, width: width, height: 1, fill: "#000" });
for (let i = 0; i <= 52; i++) {
  const x = left + Math.round(i * perUnit / 5);
  add("rect", { x: x, y: bottom, width: 1, height: 5, fill: "#000" });
  if (i <= 50) add("text", { x: x, y: bottom + 16 }, String(i / 5));
}
```
